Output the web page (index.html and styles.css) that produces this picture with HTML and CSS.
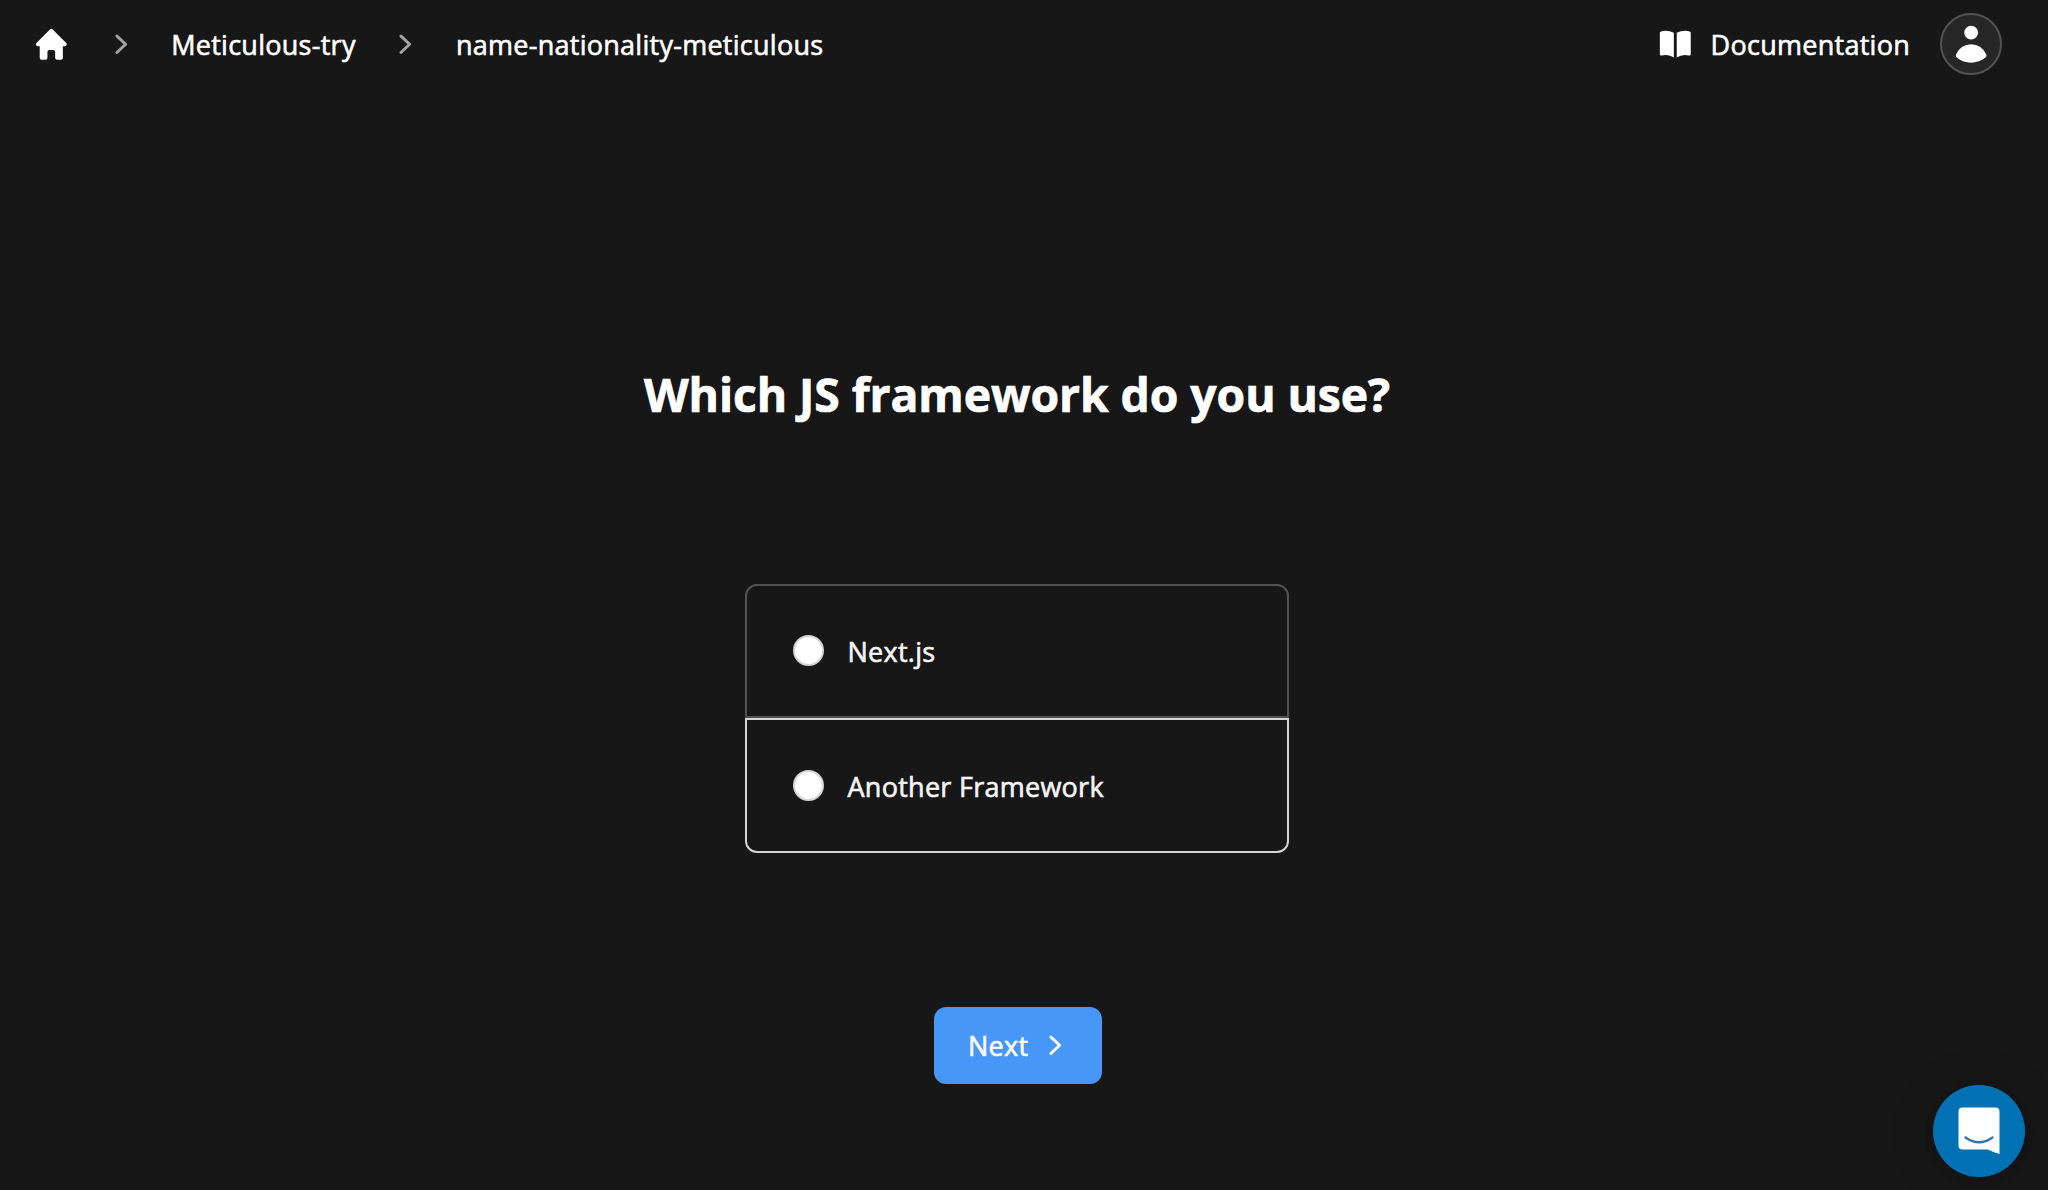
FILE: index.html
```html
<!DOCTYPE html>
<html lang="en">
<head>
<meta charset="utf-8">
<title>name-nationality-meticulous</title>
<link rel="stylesheet" href="styles.css">
</head>
<body>
<header class="topbar">
  <nav class="crumbs">
    <a class="home"><svg class="icon" viewBox="0 0 20 20"><path d="M9.293 2.293a1 1 0 011.414 0l7 7A1 1 0 0117 11h-1v6a1 1 0 01-1 1h-2a1 1 0 01-1-1v-3a1 1 0 00-1-1H9a1 1 0 00-1 1v3a1 1 0 01-1 1H5a1 1 0 01-1-1v-6H3a1 1 0 01-.707-1.707l7-7z"/></svg></a>
    <svg class="icon sep" viewBox="0 0 20 20"><path d="M7.21 14.77a.75.75 0 01.02-1.06L11.168 10 7.23 6.29a.75.75 0 111.04-1.08l4.5 4.25a.75.75 0 010 1.08l-4.5 4.25a.75.75 0 01-1.06-.02z"/></svg>
    <a class="crumb"><span class="org">Meticulous-try</span></a>
    <svg class="icon sep" viewBox="0 0 20 20"><path d="M7.21 14.77a.75.75 0 01.02-1.06L11.168 10 7.23 6.29a.75.75 0 111.04-1.08l4.5 4.25a.75.75 0 010 1.08l-4.5 4.25a.75.75 0 01-1.06-.02z"/></svg>
    <a class="crumb"><span class="project">name-nationality-meticulous</span></a>
  </nav>
  <div class="tools">
    <a class="docs"><svg class="icon" viewBox="0 0 20 20"><path d="M10.75 16.82A7.462 7.462 0 0115 15.5c.71 0 1.396.098 2.046.282A.75.75 0 0018 15.06v-11a.75.75 0 00-.546-.721A9.006 9.006 0 0015 3a8.963 8.963 0 00-4.25 1.065V16.82zM9.25 4.065A8.963 8.963 0 005 3c-.85 0-1.673.118-2.454.339A.75.75 0 002 4.06v11a.75.75 0 00.954.721A7.506 7.506 0 015 15.5c1.579 0 3.042.487 4.25 1.32V4.065z"/></svg><span class="docs-label">Documentation</span></a>
    <div class="avatar"><svg class="avatar-icon" viewBox="0 0 20 20"><path d="M10 8a3 3 0 100-6 3 3 0 000 6zM3.465 14.493a1.23 1.23 0 00.41 1.412A9.957 9.957 0 0010 18c2.31 0 4.438-.784 6.131-2.1.43-.333.604-.903.408-1.41a7.002 7.002 0 00-13.074.003z"/></svg></div>
  </div>
</header>
<main class="wizard">
  <h1 class="title"><span>Which JS framework do you use?</span></h1>
  <div class="options">
    <label class="option"><span class="radio"></span><span class="name">Next.js</span></label>
    <label class="option hovered"><span class="radio"></span><span class="name">Another Framework</span></label>
  </div>
  <button class="next"><span>Next</span><svg class="icon" viewBox="0 0 20 20"><path d="M7.21 14.77a.75.75 0 01.02-1.06L11.168 10 7.23 6.29a.75.75 0 111.04-1.08l4.5 4.25a.75.75 0 010 1.08l-4.5 4.25a.75.75 0 01-1.06-.02z"/></svg></button>
</main>
<div class="messenger"><svg class="messenger-icon" viewBox="0 0 42 48"><path class="bubble" d="M4.500 0.500H37.500Q41.500 0.500 41.500 4.500V47Q35 45 29.500 42.500H4.500Q0.500 42.500 0.500 38.500V4.500Q0.500 0.500 4.500 0.500z"/><path class="smile" d="M7.500 30.500Q21 40 34.500 30.500"/></svg></div>
</body>
</html>
```
FILE: styles.css
```css
* { box-sizing: border-box; }
body {
  margin: 0;
  height: 1190px;
  overflow: hidden;
  background: #171717;
  color: #fff;
  font: 500 27px/39px "Open Sans", "Noto Sans", sans-serif;
  letter-spacing: .27px;
  -webkit-text-stroke: .6px currentColor;
}
.icon { width: 38.600px; height: 38.600px; flex: none; fill: currentColor; display: block; }
.topbar { display: flex; justify-content: space-between; align-items: center; height: 88px; padding: 0 46px 0 32.400px; }
.crumbs, .tools, .docs { display: flex; align-items: center; white-space: nowrap; }
.sep { color: #a3a3a3; margin: 0 30.800px; }
.docs { gap: 15.500px; }
.docs-label { margin-right: 30px; }
.avatar {
  width: 62px; height: 62px; border: 2px solid #525252; border-radius: 50%;
  background: #262626; display: flex; align-items: center; justify-content: center;
}
.avatar-icon { width: 46.300px; height: 46.300px; fill: #fff; }
.wizard { width: 2034px; display: flex; flex-direction: column; align-items: center; padding-top: 275px; }
.title {
  margin: 0; font-size: 46.300px; line-height: 64px; font-weight: 700; white-space: nowrap;
  letter-spacing: -.08px; -webkit-text-stroke: .7px currentColor;
}
.options { width: 544px; margin-top: 156px; }
.option { display: flex; align-items: center; height: 134px; padding: 0 0 1px 46px; margin-top: 1px; border: 2px solid #525252; border-radius: 12px 12px 0 0; color: #f5f5f5; }
.name { padding-top: 2px; }
.hovered { height: 135px; margin-top: 0; border-color: #d4d4d4; border-radius: 0 0 12px 12px; }
.radio { width: 31px; height: 31px; border: 2px solid #d4d4d4; border-radius: 50%; background: #fff; margin-right: 23.500px; }
.next {
  display: flex; align-items: center; gap: 8px; width: 168px; height: 77px; margin: 154px 0 0 1px; padding: 0 0 0 34.500px;
  border: 0; border-radius: 12px; background: #4797f8; color: #fff; font: inherit; letter-spacing: inherit;
}
.messenger {
  position: absolute; left: 1933px; top: 1085px; width: 92px; height: 92px; border-radius: 50%;
  background: #0071b2; box-shadow: 0 2px 12px rgba(0,0,0,.06), 0 4px 48px rgba(0,0,0,.16);
  display: flex; align-items: center; justify-content: center;
}
.messenger-icon { width: 42px; height: 48px; }
.bubble { fill: #fff; }
.smile { fill: none; stroke: #2d75ad; stroke-width: 2.300; stroke-linecap: round; }
```
